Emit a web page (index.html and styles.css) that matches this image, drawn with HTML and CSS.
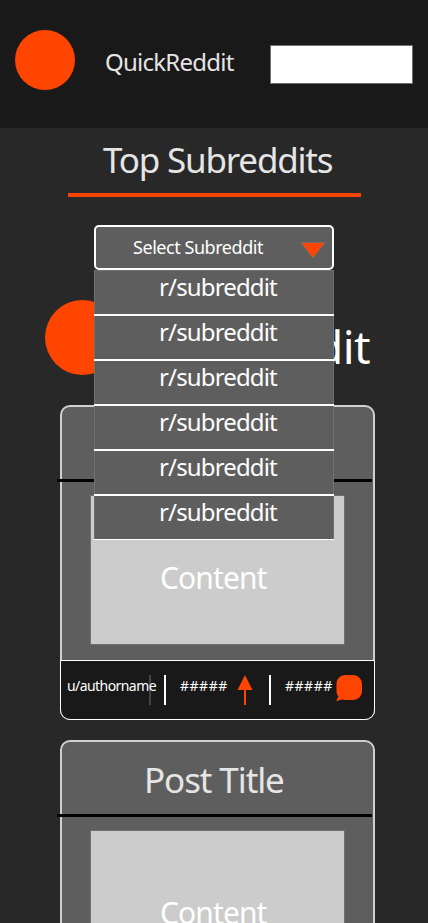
FILE: index.html
```html
<!DOCTYPE html>
<html lang="en">
<head>
<meta charset="utf-8">
<title>QuickReddit</title>
<link rel="stylesheet" href="styles.css">
</head>
<body>
<header class="topbar">
  <div class="logo"></div>
  <div class="brand"><span>QuickReddit</span></div>
  <input class="search" type="text" aria-label="Search">
</header>
<main>
  <h1 class="heading"><span>Top Subreddits</span></h1>
  <div class="picker">
    <button class="select"><span class="select-label">Select Subreddit</span>
      <svg class="caret" width="26" height="17" viewBox="0 0 26 17"><path d="M1 .5H25L13 16.2Z" fill="#ff4500" stroke="#707070" stroke-width=".8"/></svg>
    </button>
    <ul class="menu">
      <li><span>r/subreddit</span></li>
      <li><span>r/subreddit</span></li>
      <li><span>r/subreddit</span></li>
      <li><span>r/subreddit</span></li>
      <li><span>r/subreddit</span></li>
      <li><span>r/subreddit</span></li>
    </ul>
  </div>
  <section class="hero">
    <div class="hero-logo"></div>
    <div class="hero-title">QuickReddit</div>
  </section>
  <article class="post">
    <h2 class="post-title"><span>Post Title</span></h2>
    <div class="content"><span>Content</span></div>
    <footer class="meta">
      <span class="author">u/authorname</span>
      <span class="bar"></span>
      <span class="count votes">#####</span>
      <svg class="arrow" width="16" height="30" viewBox="0 0 16 30"><path d="M8 0L15.500 15H9V30H7V15H.5Z" fill="#ff4500"/></svg>
      <span class="bar"></span>
      <span class="count">#####</span>
      <svg class="bubble" width="27" height="27" viewBox="0 0 27 27"><path d="M10 0H17C22 0 26 4 26 9V16C26 21 22 25 17 25H10L6 24.500L0 26.300L2.500 21.500C1 20 .5 18 .5 16V9C.5 4 4 0 10 0Z" fill="#ff4500"/></svg>
    </footer>
  </article>
  <article class="post">
    <h2 class="post-title"><span>Post Title</span></h2>
    <div class="content"><span>Content</span></div>
  </article>
</main>
</body>
</html>
```
FILE: styles.css
```css
* { box-sizing: border-box; }
html, body { height: 100%; }
body {
  margin: 0;
  overflow: hidden;
  background: #282828;
  color: #fff;
  font-family: "Noto Sans", "Open Sans", sans-serif;
  white-space: nowrap;
}
.topbar {
  display: flex;
  height: 128px;
  padding-left: 15px;
  background: #191919;
}
.logo {
  width: 60px;
  height: 60px;
  margin-top: 30px;
  border-radius: 50%;
  background: #ff4500;
}
.brand {
  width: 165px;
  margin: 42px 0 0 30px;
  font-size: 24px;
  line-height: 40px;
  letter-spacing: -0.75px;
  color: #e5e5e5;
}
.search {
  width: 143px;
  height: 39px;
  margin-top: 45px;
  border: 1px solid #707070;
  border-radius: 0;
  background: #fff;
}
.heading {
  width: 293px;
  height: 69px;
  margin: 0 0 0 68px;
  padding-left: 35px;
  border-bottom: 4px solid #f84401;
  font-size: 35px;
  font-weight: 400;
  line-height: 64px;
  letter-spacing: -1.2px;
  color: #e5e5e5;
}
.picker {
  position: relative;
  z-index: 1;
  width: 240px;
  height: 45px;
  margin: 28px 0 0 94px;
}
.select {
  display: flex;
  align-items: flex-start;
  width: 240px;
  height: 45px;
  padding: 0 0 0 37px;
  border: 2px solid #fff;
  border-radius: 5px;
  background: #5e5e5e;
  color: #fff;
  font: 18px/41px "Noto Sans", "Open Sans", sans-serif;
  letter-spacing: -0.45px;
}
.select-label { width: 167px; text-align: left; }
.caret { margin-top: 15px; }
.menu {
  position: absolute;
  top: 45px;
  left: 0;
  width: 240px;
  height: 270px;
  margin: 0;
  padding: 0;
  list-style: none;
  background: linear-gradient(90deg, #707070 1px, #5e5e5e 1px 239px, #707070 239px);
}
.menu li {
  height: 45px;
  padding-left: 65px;
  border-top: 1px solid #fff;
  border-bottom: 1px solid #fff;
  font-size: 24px;
  line-height: 32px;
  letter-spacing: -0.85px;
}
.menu li:first-child { border-top-color: #707070; }
.hero {
  display: flex;
  justify-content: space-between;
  width: 325px;
  height: 75px;
  margin: 30px 0 30px 45px;
}
.hero-logo {
  flex: none;
  width: 75px;
  height: 75px;
  border-radius: 50%;
  background: #ff4500;
}
.hero-title {
  flex: none;
  margin-left: -20px;
  font-size: 46px;
  line-height: 93px;
  letter-spacing: -0.6px;
}
.post {
  width: 315px;
  height: 315px;
  margin: 0 0 20px 60px;
  border: 2px solid #d0d0d0;
  border-radius: 10px;
  background: #5e5e5e;
}
.post-title {
  width: 315px;
  height: 75px;
  margin: 0 0 0 -5px;
  padding-left: 87px;
  border-bottom: 3px solid #000;
  font-size: 35px;
  font-weight: 400;
  line-height: 75px;
  letter-spacing: -1.1px;
  color: #e5e5e5;
}
.content {
  width: 255px;
  height: 150px;
  margin: 13px 0 0 28px;
  padding-left: 69px;
  border: 1px solid #707070;
  background: #ccc;
  font-size: 30px;
  line-height: 164px;
  letter-spacing: -0.9px;
}
.meta {
  display: flex;
  align-items: flex-start;
  width: 315px;
  height: 60px;
  margin: 15px 0 0 -2px;
  padding: 14px 0 0 6px;
  border: 1px solid #fff;
  border-radius: 0 0 10px 10px;
  background: #191919;
  font-size: 14px;
  line-height: 21px;
}
.author {
  width: 97px;
  letter-spacing: -0.57px;
  background: linear-gradient(#444 0 0) 82px 0 / 2px 30px no-repeat;
  height: 30px;
}
.bar { width: 2px; height: 30px; background: #fff; }
.count { width: 51px; margin-left: 14px; letter-spacing: 0.5px; }
.votes { width: 57px; }
.arrow { margin-right: 16px; }
```
